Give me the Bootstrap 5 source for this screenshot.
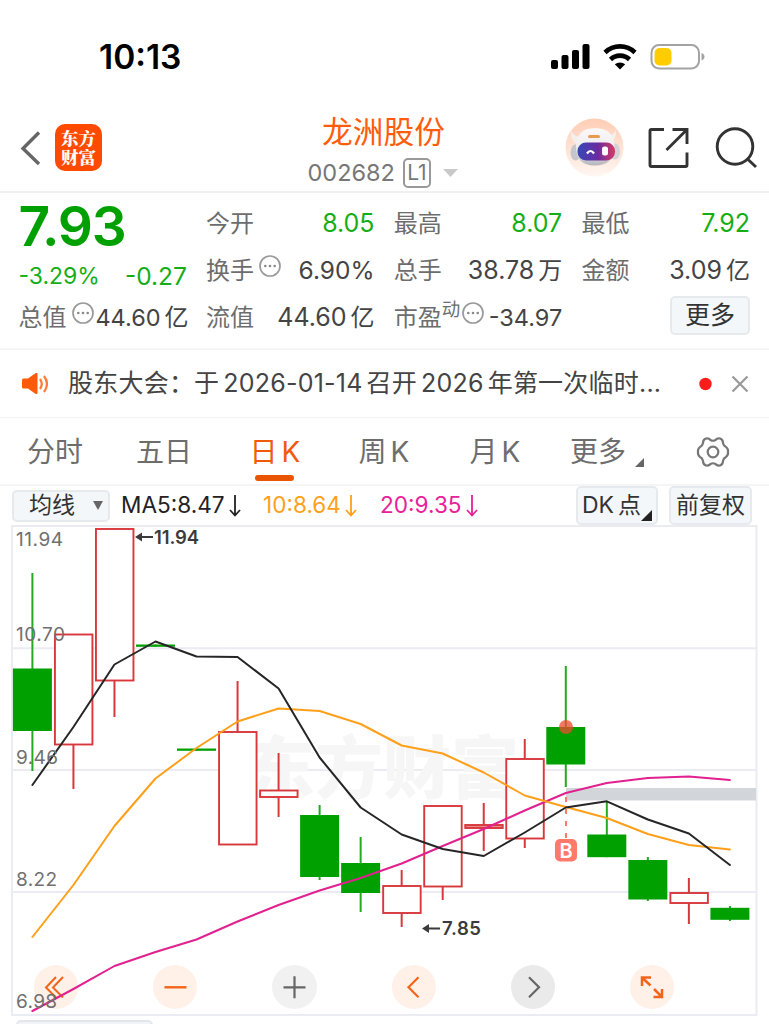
<!DOCTYPE html>
<html lang="zh-CN">
<head>
<meta charset="utf-8">
<meta name="viewport" content="width=device-width, initial-scale=1">
<title>龙洲股份 002682</title>
<link href="https://cdn.jsdelivr.net/npm/bootstrap@5.3.0/dist/css/bootstrap.min.css" rel="stylesheet">
<style>
  body { font-family: Inter, "Noto Sans CJK SC", sans-serif; color: #444; background: #fff; height: 1024px; overflow: hidden; line-height: 1; }
  svg { display: block; flex: none; }
  .status { height: 92px; padding: 22px 64px 0 99px; }
  .clock { font-size: 33.5px; line-height: 34px; font-weight: 600; color: #000; padding-top: 18px; }
  .topbar { height: 101px; border-bottom: 2px solid #f0f0f1; padding: 0 12px 0 20px; }
  .side { width: 235px; padding-top: 12px; }
  .brand { width: 47px; height: 47px; border-radius: 10px; background: #ff4a00; color: #fff; font: 900 17.5px/1 "Noto Serif CJK SC", "Noto Sans CJK SC", sans-serif; margin-left: 14px; padding-bottom: 1px; }
  .brand span { display: block; height: 19px; line-height: 19px; overflow: hidden; }
  .stock { font-size: 30.7px; color: #ff5c0d; }
  .code { font-size: 23.5px; color: #777; }
  .lv { width: 28px; height: 30px; border: 2px solid #999; border-radius: 5px; font-size: 21px; color: #777; margin: 0 12px 0 8px; }
  .quote { display: grid; grid-template-columns: repeat(4, 168.5px); grid-template-rows: 47px 47px 47px; column-gap: 19.2px; height: 155px; padding: 7px 0 0 18.4px; font-size: 25px; }
  .quote > div { display: flex; justify-content: space-between; align-items: center; white-space: nowrap; }
  .lab { font-size: 24px; color: #6d6d6d; }
  .unit { font-size: 24px; margin-left: 4px; }
  .down { color: #16ae16; }
  .price { font-size: 55px; font-weight: 600; color: #00a000; letter-spacing: -1.2px; padding-top: 5px; }
  .more { width: 80px; height: 39px; border: 2px solid #e6eaed; border-radius: 5px; background: #f4f7f9; font-size: 25px; color: #333; }
  .news { height: 70px; border-top: 2px solid #f5f5f6; border-bottom: 1px solid #f2f2f3; padding-left: 22px; font-size: 25px; color: #444; white-space: nowrap; }
  .news .num { margin: 0 4px; }
  .headline { margin-left: 19px; width: 597px; letter-spacing: .22px; }
  .tabs { height: 68px; border-bottom: 2px solid #f5f5f6; font-size: 28px; color: #6d6d6d; position: relative; padding-top: 1px; }
  .tabs > div { position: relative; text-align: center; white-space: nowrap; }
  .tabs .on { color: #f05a0c; }
  .tabs .on::after { content: ""; position: absolute; left: 50%; margin-left: -20px; bottom: -15px; width: 39px; height: 6px; border-radius: 3px; background: #ea5504; }
  .k { margin-left: 4px; }
  .mabar { height: 39px; padding-left: 12px; font-size: 22.6px; white-space: nowrap; }
  .chip { border: 2px solid #e6eaed; background: #f4f7f9; border-radius: 5px; color: #333; height: 39px; position: relative; font-size: 23px; }
  .arr { margin-left: 4px; }
  .plot { position: relative; height: 491px; }
  .plot > svg { position: relative; pointer-events: none; }
  .ctl { position: absolute; left: 34px; top: 440px; gap: 74.9px; }
  .rnd { width: 44.3px; height: 44.3px; border-radius: 50%; background: #fff0e8; color: #f2651a; }
  .rnd.off { background: #f1f1f1; color: #666; }
  .peek { width: 137px; height: 20px; margin: 4px 0 0 16px; border: 2px solid #e2e6ea; border-radius: 5px; background: #f2f5f7; }
</style>
</head>
<body>
<div class="status d-flex justify-content-between align-items-start">
  <div class="clock">10:13</div>
  <svg width="155" height="30" viewBox="550 42 155 30" style="margin-top:20px">
    <g fill="#000"><rect x="551" y="60" width="7" height="9" rx="2"/><rect x="561.5" y="55" width="7" height="14" rx="2"/><rect x="572" y="50" width="7" height="19" rx="2"/><rect x="582.5" y="44" width="7" height="25" rx="2"/></g>
    <g fill="none" stroke="#000" stroke-width="4.6"><path d="M605 52.5a21.5 21.5 0 0 1 30 0"/><path d="M610.5 59.5a13.5 13.5 0 0 1 19 0"/></g>
    <path d="M614.8 64.3a8 8 0 0 1 10.4 0L620 69.5z"/>
    <rect x="651.5" y="45" width="47.5" height="23.5" rx="7.5" fill="#fff" stroke="#a3a3a3" stroke-width="2"/>
    <rect x="654.5" y="48" width="17" height="17.5" rx="5" fill="#fc0"/>
    <path d="M701.5 53q3 1 3 3.700t-3 3.700z" fill="#a3a3a3"/>
  </svg>
</div>
<div class="topbar d-flex justify-content-between">
  <div class="side d-flex align-items-center" style="height:99px">
    <svg width="21" height="36" viewBox="0 0 21 36" fill="none" stroke="#666" stroke-width="3.400"><path d="M19 2.500 3 18.500l16 15.500"/></svg>
    <div class="brand d-flex flex-column align-items-center justify-content-center"><span>东方</span><span>财富</span></div>
  </div>
  <div class="text-center" style="padding-top:25px;width:160px;margin-left:-10px">
    <div class="stock text-nowrap">龙洲股份</div>
    <div class="d-flex align-items-center" style="margin-top:10px;padding-left:4px">
      <span class="code">002682</span><span class="lv d-flex align-items-center justify-content-center flex-shrink-0">L1</span>
      <svg width="15" height="8"><path d="M0 0h15L7.500 8z" fill="#c9c9c9"/></svg>
    </div>
  </div>
  <div class="side d-flex align-items-center justify-content-end" style="height:99px">
    <svg width="192" height="60" viewBox="565 117.500 192 60">
      <defs>
        <linearGradient id="halo" x1="0" y1="0" x2="0" y2="1"><stop offset="0" stop-color="#ffcdb5"/><stop offset="1" stop-color="#fff6f2"/></linearGradient>
        <linearGradient id="visor"><stop offset="0" stop-color="#3548b8"/><stop offset=".55" stop-color="#6b2aa0"/><stop offset="1" stop-color="#d83a62"/></linearGradient>
        <linearGradient id="shell" x1="0" y1="0" x2="0" y2="1"><stop offset="0" stop-color="#fbf9f8"/><stop offset=".6" stop-color="#eceaec"/><stop offset="1" stop-color="#b4b4bc"/></linearGradient>
      </defs>
      <circle cx="594.500" cy="147" r="29" fill="url(#halo)"/>
      <path d="M571 130q-1 9 5 13l7-5-5-2q-5-1-7-6zM616 129q1 9-5 13l-7-5 6-2q5-2 6-6z" fill="#f4efee"/>
      <ellipse cx="575.500" cy="152" rx="5" ry="8" fill="#c6c6cd"/><ellipse cx="615" cy="151" rx="5" ry="8" fill="#d3d2d8"/>
      <path d="M576 146q0-18 19-18.500 19 .5 19.500 18.500 0 19-20 19-18.500 0-18.500-19z" fill="url(#shell)"/>
      <rect x="588" y="134.500" width="12" height="3" rx="1.500" fill="#eb9a4c"/>
      <rect x="577.500" y="142" width="37.500" height="18" rx="8.500" fill="url(#visor)"/>
      <path d="M587 153q3.500-5 7 0" fill="none" stroke="#fff" stroke-width="2.200"/><rect x="602" y="146" width="6" height="9" rx="2.500" fill="#fff"/>
      <g fill="none" stroke="#333" stroke-width="2.900">
        <path d="M664 129h-12.500q-1.500 0-1.500 1.500v34q0 1.500 1.500 1.500h34q1.500 0 1.500-1.500V152M672.500 129H687v14.500M687 129l-20.500 20.500"/>
        <circle cx="735" cy="146" r="17.800"/><path d="m747.500 158.500 8.500 8"/>
      </g>
    </svg>
  </div>
</div>

<div class="quote">
  <div class="price">7.93</div>
  <div><span class="lab">今开</span><span class="down">8.05</span></div>
  <div><span class="lab">最高</span><span class="down">8.07</span></div>
  <div><span class="lab">最低</span><span class="down">7.92</span></div>
  <div class="down" style="padding-top:11px"><span style="font-size:23px">-3.29%</span><span style="font-size:24.500px">-0.27</span></div>
  <div><span class="d-flex"><span class="lab">换手</span><svg class="ms-1" style="margin-top:-5px" width="24" height="24"><use href="#dots"/></svg></span><span style="font-size:24.500px">6.90%</span></div>
  <div><span class="lab">总手</span><span>38.78<span class="unit">万</span></span></div>
  <div><span class="lab">金额</span><span>3.09<span class="unit">亿</span></span></div>
  <div><span class="d-flex"><span class="lab">总值</span><svg style="margin:-5px 0 0 5px" width="24" height="24"><g id="dots"><circle cx="12" cy="12" r="10" fill="none" stroke="#999" stroke-width="1.700"/><g fill="#888"><circle cx="7.300" cy="12" r="1.300"/><circle cx="12" cy="12" r="1.300"/><circle cx="16.700" cy="12" r="1.300"/></g></g></svg></span><span style="font-size:23.500px">44.60<span class="unit">亿</span></span></div>
  <div><span class="lab">流值</span><span>44.60<span class="unit">亿</span></span></div>
  <div><span class="d-flex"><span class="lab">市盈</span><span class="lab" style="font-size:18.500px;margin-top:-6px">动</span><svg style="margin:-5px 0 0 1px" width="24" height="24"><use href="#dots"/></svg></span><span style="font-size:23.500px">-34.97</span></div>
  <div class="justify-content-end"><span class="more d-flex align-items-center justify-content-center" style="margin-top:-5px">更多</span></div>
</div>

<div class="news d-flex align-items-center">
  <svg width="27" height="22" viewBox="0 0 27 22"><path d="M0 7q0-1.500 1.500-1.500H6L13 .5q2.500-1.500 2.500 1v18q0 2.500-2.500 1L6 15.500H1.500Q0 15.500 0 14z" fill="#ff5a0a"/><path d="M18 6q3.500 5 0 10M22 3q6 8 0 16" fill="none" stroke="#ff7a38" stroke-width="2.200"/></svg>
  <div class="headline">股东大会：于<span class="num">2026-01-14</span>召开<span class="num">2026</span>年第一次临时...</div>
  <svg width="60" height="20" style="margin-left:34px"><circle cx="6.500" cy="10" r="6.200" fill="#fb1c1c"/><path d="m33.500 2.500 15 15m0-15-15 15" stroke="#999" stroke-width="2.200"/></svg>
</div>

<div class="tabs d-flex align-items-center">
  <div style="width:110px">分时</div>
  <div style="width:108px">五日</div>
  <div class="on" style="width:114px">日<span class="k">K</span></div>
  <div style="width:104px">周<span class="k">K</span></div>
  <div style="width:118px">月<span class="k">K</span></div>
  <div class="d-flex align-items-end" style="width:142px;padding-left:16px">更多<svg width="9" height="9" style="margin:0 0 -1px 9px"><path d="M9 0v9H0z" fill="#666"/></svg></div>
  <svg width="34" height="34" viewBox="-17 -17 34 34" fill="none" stroke="#777" stroke-width="2.200" stroke-linejoin="round"><circle r="5.300"/><path d="M-7-13.500Q-4-14-2.500-12 0-10.500 2.500-12 4-14 7-13.500 10-12.500 10-9 10.500-6 13-5 15.500-3 15 0 15.500 3 13 5 10.500 6 10 9 10 12.500 7 13.500 4 14 2.500 12 0 10.500-2.500 12-4 14-7 13.500-10 12.500-10 9-10.500 6-13 5-15.500 3-15 0-15.500-3-13-5-10.500-6-10-9-10-12.500-7-13.500z"/></svg>
</div>

<div class="mabar d-flex align-items-center">
  <div class="chip d-flex align-items-center" style="width:98px;height:32px;padding-left:15px">均线<svg width="10" height="9" style="margin-left:18px"><path d="M0 0h10L5 9z" fill="#666"/></svg></div>
  <div class="d-flex align-items-center" style="margin-left:11px;color:#222;width:142px">MA5:8.47<svg class="arr" width="12" height="24"><path id="dn" d="M6 1v20M1 16l5 5.500 5-5.500" fill="none" stroke="currentColor" stroke-width="1.800"/></svg></div>
  <div class="d-flex align-items-center" style="color:#ff9f1a;width:117px">10:8.64<svg class="arr" width="12" height="24"><use href="#dn"/></svg></div>
  <div class="d-flex align-items-center" style="color:#e8209a;width:196px">20:9.35<svg class="arr" width="12" height="24"><use href="#dn"/></svg></div>
  <div class="chip d-flex align-items-center" style="width:82px;padding-left:4px">DK<span style="margin-left:4px">点</span><svg class="position-absolute" style="right:4px;bottom:2px" width="11" height="11"><path d="M11 0v11H0z" fill="#222"/></svg></div>
  <div class="chip d-flex align-items-center justify-content-center" style="width:83px;margin-left:11px">前复权</div>
</div>

<div class="plot">
  <div class="ctl d-flex">
    <div class="rnd"><svg width="44" height="44" fill="none" stroke="currentColor" stroke-width="2"><path d="M22 12 12 22.500l10 10M29 12 19 22.500l10 10"/></svg></div>
    <div class="rnd"><svg width="44" height="44" stroke="currentColor" stroke-width="2.400"><path d="M11.500 22.300h22"/></svg></div>
    <div class="rnd off"><svg width="44" height="44" stroke="currentColor" stroke-width="2.200"><path d="M11.500 22.300h22M22.500 11.300v22"/></svg></div>
    <div class="rnd"><svg width="44" height="44" fill="none" stroke="currentColor" stroke-width="2.200"><path d="m26.500 12.300-10 10 10 10"/></svg></div>
    <div class="rnd off" style="background:#eaeaea"><svg width="44" height="44" fill="none" stroke="currentColor" stroke-width="2.200"><path d="m18 12.300 10 10-10 10"/></svg></div>
    <div class="rnd"><svg width="44" height="44" fill="none" stroke="currentColor" stroke-width="2.500"><path d="M12 21V12.500h9M12.500 13l8 7.500M32 24v8H23.500M31.500 31.500l-7.500-7.500"/></svg></div>
  </div>
  <svg id="chart" width="769" height="491" viewBox="0 525 769 491">
    <g fill="none" stroke="#ebebf4" stroke-width="2"><path d="M12 526H756.500V1015H12zM12 648.200H757M12 770H757M12 892H757"/></g>
    <text x="247" y="793" font-size="68" font-weight="900" fill="#f6f6f7" font-family="Noto Sans CJK SC">东方财富</text>
    <path d="M566 788H756v12.500H566z" fill="#d2d6db"/>
    <g id="candles"></g>
    <g id="averages" fill="none" stroke-width="2" stroke-linejoin="round" stroke-linecap="round"></g>
    <circle cx="566" cy="727" r="7" fill="#f04a30" fill-opacity=".75"/>
    <path d="M566 797v42" stroke="#ff7a6b" stroke-width="2" stroke-dasharray="5 7"/>
    <rect x="555" y="839" width="22" height="22.500" rx="5" fill="#ff7a6b"/>
    <text x="566" y="857.500" font-size="20" font-weight="600" fill="#fff" text-anchor="middle" font-family="Inter">B</text>
    <g font-size="19" fill="#707070" font-family="Inter">
      <text x="16" y="546" textLength="47">11.94</text><text x="16" y="641" textLength="49">10.70</text><text x="16" y="764" textLength="42">9.46</text><text x="16" y="886" textLength="41">8.22</text><text x="16" y="1008" textLength="41">6.98</text>
    </g>
    <g font-size="18.500" font-weight="600" fill="#3b3b3b" font-family="Inter"><text x="154" y="544" textLength="45">11.94</text><text x="442" y="935" textLength="39">7.85</text></g>
    <g fill="#3b3b3b" stroke="#3b3b3b" stroke-width="2"><path d="M138 537h15M425 928.500h15"/><path stroke="none" d="M135 537l7-4.500v9zM422 928.500l7-4.500v9z"/></g>
  </svg>
</div>
<div class="peek"></div>

<script src="https://cdn.jsdelivr.net/npm/bootstrap@5.3.0/dist/js/bootstrap.bundle.min.js"></script>
<script>
  // each candle: direction, high, body top, body bottom, low
  const candles = [
    ['g',573,668.5,731,771],['r',634.5,634.5,744.500,789],['r',529,529,680.500,717],['g',644.500,644.500,646.800,646.800],['g',748.500,748.500,750.800,750.800],
    ['r',681,732,844.500,844.500],['r',753,790.500,797,817],['g',805,815,877,880],['g',837,863,893,912],['r',870,886,913,927],
    ['r',806,806,886.500,900],['r',803,825,828,851],['r',739,759,838.500,848],['g',666,727,764.500,787],['g',801,834.500,857.200,857.200],
    ['g',857,860,899.500,901],['r',878,893,903,924],['g',906,907.800,919.800,921]];
  const averages = {
    '#e0218f': [1011,989,966,952,939.5,921.500,905,890.500,878,863.500,846,829,810.500,793,783,778,776.500,780],
    '#ff9f1a': [937,885,826,778.500,748,721.500,708.500,711,724,745.500,753.500,772.500,795.500,807,818,834,845,849.500],
    '#262626': [785,727,664.500,641.500,656.500,657,688.500,757.500,807.500,834.500,849,856,832.500,807.500,801.300,819.500,833.500,865]};
  const cx = i => 32.4 + i * 41.03;
  document.getElementById('candles').innerHTML = candles.map(([d, h, t, b, l], i) => {
    const x = cx(i), up = d === 'r', c = up ? '#d8383c' : '#00a000';
    return `<path d="M${x} ${h}V${l}" stroke="${up ? c : '#22aa22'}" stroke-width="2"/>` +
      (up ? `<rect x="${x - 18.5}" y="${t}" width="37.500" height="${b - t}" fill="${b - t < 4 ? '#e88a8c' : '#fff'}" stroke="${c}" stroke-width="1.900"/>`
          : `<rect x="${x - 19.5}" y="${t}" width="39" height="${b - t}" fill="${c}"/>`);
  }).join('');
  document.getElementById('averages').innerHTML = Object.entries(averages).map(([c, v]) =>
    `<polyline stroke="${c}" points="${v.map((y, i) => cx(i) + ',' + y).join(' ')}"/>`).join('');
</script>
</body>
</html>
